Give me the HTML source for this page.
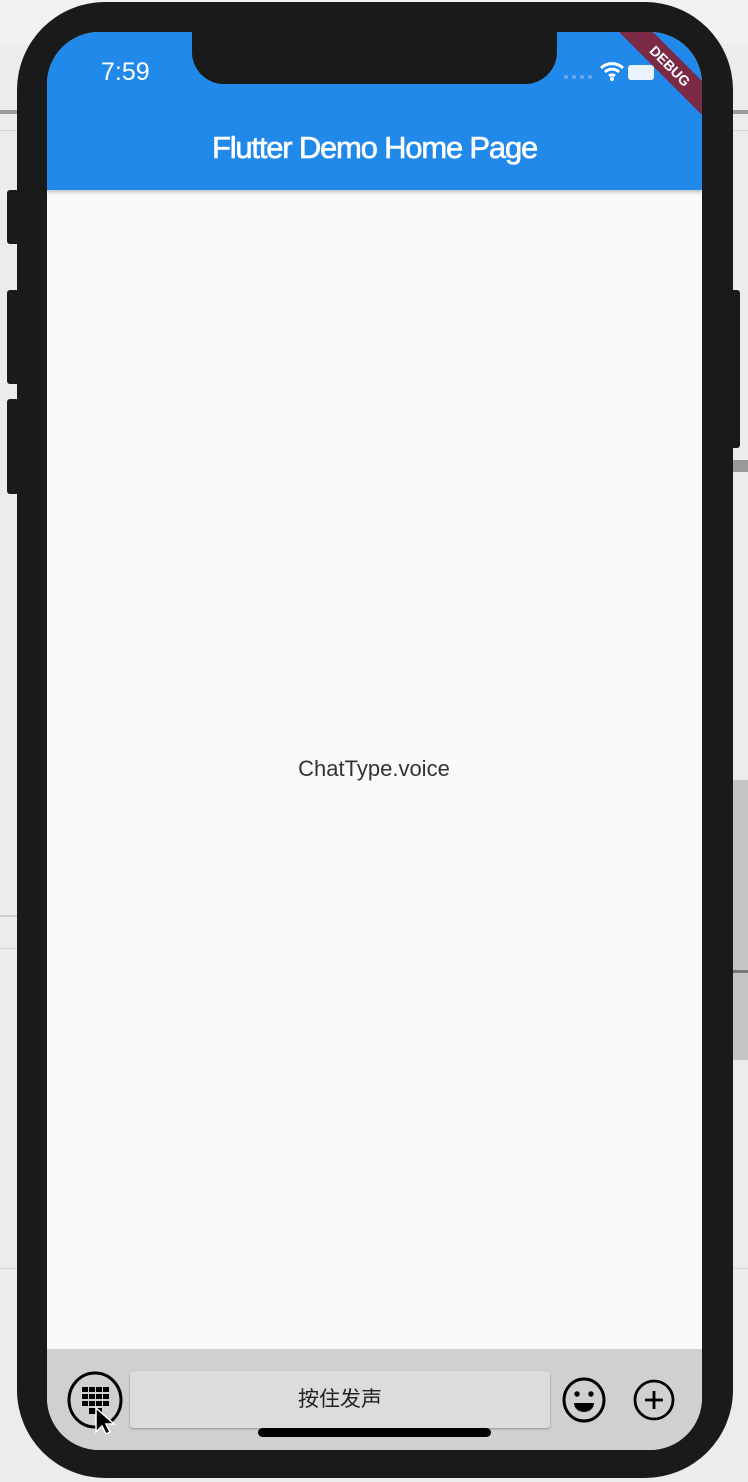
<!DOCTYPE html>
<html><head><meta charset="utf-8"><style>
*{margin:0;padding:0;box-sizing:border-box}
body{width:748px;height:1482px;background:#ececec;position:relative;overflow:hidden;font-family:"Liberation Sans","Noto Sans CJK SC",sans-serif}
.a{position:absolute}
</style></head><body>
<div class="a" style="left:0;top:0;width:748px;height:44px;background:#f1f1f1"></div>
<div class="a" style="left:0;top:110px;width:748px;height:4px;background:#9a9a9a"></div>
<div class="a" style="left:0;top:130px;width:748px;height:1px;background:#d6d6d6"></div>
<div class="a" style="left:0;top:915px;width:748px;height:2px;background:#d0d0d0"></div>
<div class="a" style="left:0;top:948px;width:748px;height:1px;background:#d6d6d6"></div>
<div class="a" style="left:0;top:1268px;width:748px;height:1px;background:#d6d6d6"></div>
<div class="a" style="left:730px;top:780px;width:18px;height:280px;background:#c4c4c4"></div>
<div class="a" style="left:730px;top:970px;width:18px;height:3px;background:#777"></div>
<div class="a" style="left:730px;top:460px;width:18px;height:12px;background:#999"></div>
<div class="a" style="left:7px;top:190px;width:12px;height:54px;background:#1a1a1a;border-radius:3px"></div>
<div class="a" style="left:7px;top:290px;width:12px;height:94px;background:#1a1a1a;border-radius:3px"></div>
<div class="a" style="left:7px;top:399px;width:12px;height:95px;background:#1a1a1a;border-radius:3px"></div>
<div class="a" style="left:730px;top:290px;width:10px;height:158px;background:#1a1a1a;border-radius:3px"></div>
<div class="a" style="left:17px;top:2px;width:716px;height:1476px;background:#1a1a1a;border-radius:88px"></div>
<div class="a" style="left:47px;top:32px;width:655px;height:1418px;background:#fafafa;border-radius:52px;overflow:hidden">
  <div class="a" style="left:0;top:0;width:655px;height:158px;background:#2089ea;box-shadow:0 2px 4px rgba(0,0,0,.25)"></div>
  <div class="a" style="left:0;top:98px;width:655px;text-align:center;color:#fff;font-size:31px;letter-spacing:-1.2px;-webkit-text-stroke:0.6px #fff">Flutter Demo Home Page</div>
  <div class="a" style="left:54px;top:26px;color:#fff;font-size:25px">7:59</div>
  <div class="a" style="left:517px;top:43px;width:28px;height:4px;border-top:4px dotted #6aa8e8"></div>
  <svg class="a" style="left:552px;top:28px" width="26" height="22" viewBox="0 0 26 22"><path d="M2 8a16 16 0 0 1 22 0M6 12a10 10 0 0 1 14 0M10 16a4.5 4.5 0 0 1 6 0" stroke="#fff" stroke-width="3" fill="none"/><circle cx="13" cy="19" r="2" fill="#fff"/></svg>
  <div class="a" style="left:581px;top:33px;width:26px;height:15px;background:#fff;border-radius:3px;opacity:.9"></div>
  <div class="a" style="left:548px;top:22px;width:150px;height:24px;background:#7a2a44;transform:rotate(45deg);color:#fff;font-size:14px;font-weight:bold;text-align:center;line-height:24px">DEBUG</div>
  <div class="a" style="left:0;top:1317px;width:655px;height:101px;background:#d0d0d0"></div>
  <div class="a" style="left:83px;top:1339px;width:420px;height:57px;background:#dcdcdc;border-radius:3px;box-shadow:0 1px 2px rgba(0,0,0,.3);text-align:center;line-height:57px;font-size:21px;color:#222">按住发声</div>
  <div class="a" style="left:211px;top:1396px;width:233px;height:9px;background:#000;border-radius:5px"></div>
  <svg class="a" style="left:18px;top:1338px" width="62" height="64" viewBox="0 0 62 64"><ellipse cx="30" cy="30" rx="26" ry="27" stroke="#000" stroke-width="3" fill="none"/><g fill="#000"><rect x="17" y="17" width="6" height="5"/><rect x="24" y="17" width="6" height="5"/><rect x="31" y="17" width="6" height="5"/><rect x="38" y="17" width="6" height="5"/><rect x="17" y="24" width="6" height="5"/><rect x="24" y="24" width="6" height="5"/><rect x="31" y="24" width="6" height="5"/><rect x="38" y="24" width="6" height="5"/><rect x="17" y="31" width="6" height="5"/><rect x="24" y="31" width="6" height="5"/><rect x="31" y="31" width="6" height="5"/><rect x="38" y="31" width="6" height="5"/><rect x="24" y="38" width="13" height="6"/></g><path d="M31 38l0 24 6-6 4 8 4-2-4-8 8 0z" fill="#000" stroke="#fff" stroke-width="1.5"/></svg>
  <svg class="a" style="left:514px;top:1345px" width="46" height="46" viewBox="0 0 46 46"><ellipse cx="23" cy="23" rx="20" ry="21" stroke="#000" stroke-width="3" fill="none"/><circle cx="16" cy="17" r="2.7"/><circle cx="30" cy="17" r="2.7"/><path d="M13 26h20a10 9 0 0 1-20 0z"/></svg>
  <svg class="a" style="left:585px;top:1347px" width="44" height="44" viewBox="0 0 44 44"><circle cx="22" cy="21" r="19" stroke="#000" stroke-width="2.8" fill="none"/><path d="M22 12v18M13 21h18" stroke="#000" stroke-width="2.8"/></svg>
</div>
<div class="a" style="left:192px;top:30px;width:365px;height:54px;background:#1a1a1a;border-radius:0 0 32px 32px"></div>
<div class="a" style="left:0;top:756px;width:748px;text-align:center;font-size:22px;color:#333">ChatType.voice</div>
</body></html>
